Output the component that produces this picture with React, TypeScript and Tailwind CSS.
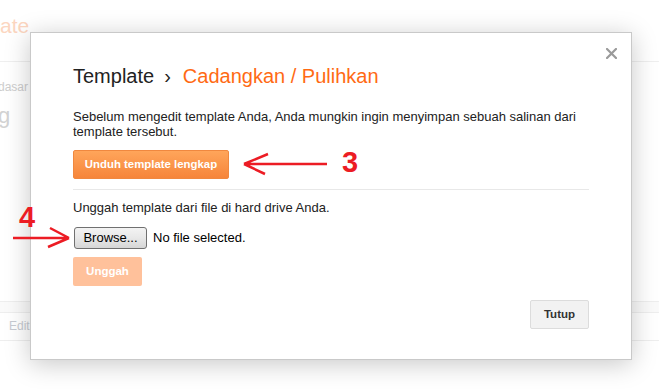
import React from "react";

export default function App() {
  return (
    <div className="relative w-[659px] h-[389px] overflow-hidden bg-white font-['Liberation_Sans',Arial,sans-serif]">
      {/* faded page behind the dialog */}
      <div className="flex flex-col">
        <div className="pt-[14px] ml-[-56px] text-[21px] leading-[24px] text-[#fcd6c0]">Template</div>
        <div className="mt-[23px] border-t border-[#efefef]" />
        <div className="mt-[18px] ml-[-2px] text-[12px] leading-[15px] text-[#cdcdcd]">dasar</div>
        <div className="mt-[8px] ml-[-2px] text-[22px] leading-[26px] text-[#d2d2d2]">g</div>
        <div className="mt-[172px] border-t border-[#eeeeee]" />
        <div className="h-[10px] bg-[#fafafa]" />
        <div className="border-t border-b border-[#eeeeee] h-[29px] pl-[9px] text-[12px] leading-[27px] text-[#c7cbd2]">Edit</div>
      </div>

      {/* dialog */}
      <div className="absolute left-[30px] top-[32px] w-[602px] h-[328px] bg-white border border-[#c9c9c9] shadow-[0_4px_24px_rgba(0,0,0,0.22)] flex flex-col pl-[42px] pr-[42px] pt-[31px] pb-[30px] text-[#222]">
        <button className="absolute right-[14px] top-[15px] w-[11px] h-[11px]" aria-label="close">
          <svg width="11" height="11" viewBox="0 0 11 11">
            <path d="M1 1L10 10M10 1L1 10" stroke="#9a9a9a" strokeWidth="2.2" strokeLinecap="square" />
          </svg>
        </button>

        <h1 className="text-[20px] leading-[24px] text-[#222]">
          Template
          <span className="ml-[10px] mr-[12px]">›</span>
          <span className="text-[#ff6a13]">Cadangkan / Pulihkan</span>
        </h1>

        <p className="mt-[21px] text-[13px] leading-[15px]">
          Sebelum mengedit template Anda, Anda mungkin ingin menyimpan sebuah salinan dari template tersebut.
        </p>

        <div className="mt-[11px] flex">
          <div className="h-[29px] w-[156px] flex items-center justify-center rounded-[2px] border border-[#f0883f] bg-gradient-to-b from-[#ffa55a] to-[#f6853a] text-white font-bold text-[11.4px]">
            Unduh template lengkap
          </div>
        </div>

        <div className="mt-[10px] border-t border-[#e8e8e8]" />

        <p className="mt-[10px] text-[13px] leading-[15px]">Unggah template dari file di hard drive Anda.</p>

        <div className="mt-[12px] flex items-center h-[22px]">
          <div className="ml-[1px] w-[73px] h-[22px] rounded-[3px] border border-[#707070] bg-gradient-to-b from-[#f3f3f3] via-[#e8e8e8] to-[#d6d6d6] flex items-center justify-center text-[13px] text-black">
            Browse...
          </div>
          <span className="ml-[6px] text-[13px] text-black">No file selected.</span>
        </div>

        <div className="mt-[8px] flex">
          <div className="h-[29px] w-[69px] flex items-center justify-center rounded-[2px] bg-[#ffc19b] text-white font-bold text-[11.5px]">
            Unggah
          </div>
        </div>

        <div className="flex-1" />

        <div className="flex justify-end">
          <div className="h-[29px] w-[59px] flex items-center justify-center rounded-[2px] border border-[#dcdcdc] bg-[#f2f2f2] text-[#333] font-bold text-[11.5px]">
            Tutup
          </div>
        </div>
      </div>

      {/* annotation 3 */}
      <svg className="absolute left-[240px] top-[150px]" width="92" height="28" viewBox="0 0 92 28">
        <path d="M4 14H87M4 14L28 4M4 14L25 24" stroke="#ec1c24" strokeWidth="2.5" fill="none" />
      </svg>
      <div className="absolute left-[342px] top-[146px] text-[29px] leading-[32px] font-bold text-[#ec1c24]">3</div>

      {/* annotation 4 */}
      <div className="absolute left-[19px] top-[201px] text-[29px] leading-[32px] font-bold text-[#ec1c24]">4</div>
      <svg className="absolute left-[10px] top-[224px]" width="64" height="28" viewBox="0 0 64 28">
        <path d="M3 14H59M59 14L40 4M59 14L38 23" stroke="#ec1c24" strokeWidth="2.5" fill="none" />
      </svg>
    </div>
  );
}
